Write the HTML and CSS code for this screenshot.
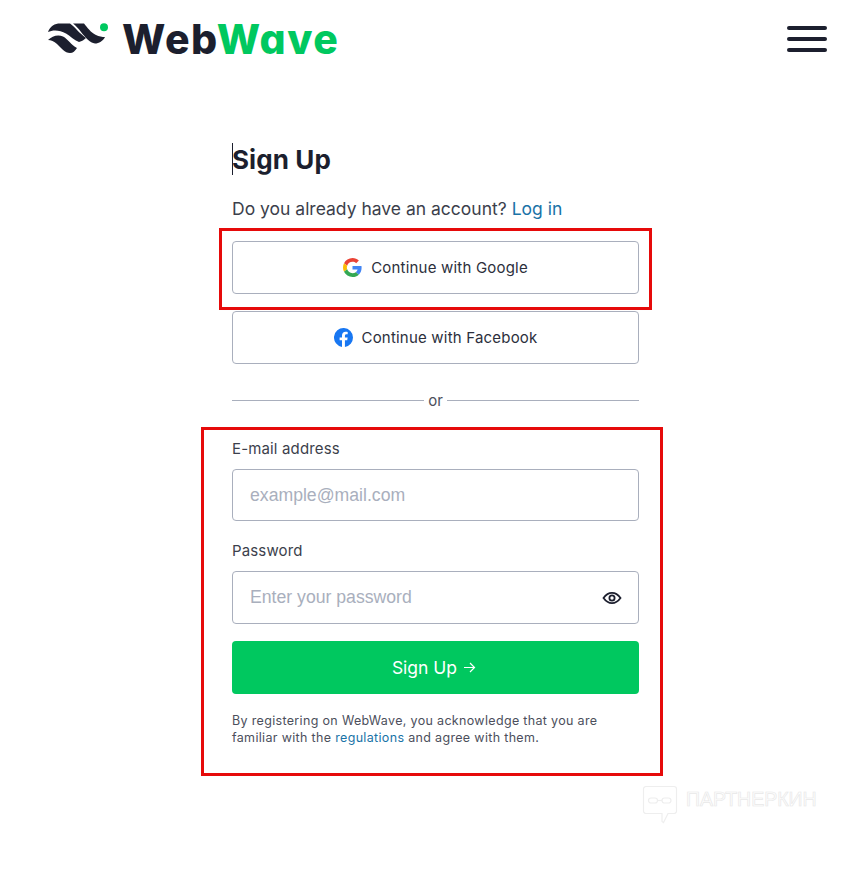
FILE: index.html
```html
<!DOCTYPE html>
<html lang="en">
<head>
  <meta charset="utf-8">
  <title>Sign Up - WebWave</title>
  <link rel="stylesheet" href="styles.css">
</head>
<body>

<div class="header">
  <a class="logo" href="#">
    <svg class="logo-mark" width="60" height="32" viewBox="0 0 60 32">
      <path fill="#1c1f2e" d="M0 9C2 3 7 .5 12 .5H22C27 4 31 10 38 15C36 17 34 18 31 19C26 17 22 13 18 10.500C12 7 5 6.500 0 9z"/>
      <path fill="#1c1f2e" d="M25 .5H36C39 4 43 10 48 12C51 13.500 54 14 57 14C55 18 51 20.500 47 20.500C42 20 37 14 33 9C30 5 28 3 25 .5z"/>
      <path fill="#1c1f2e" d="M0 17C4 13 10 11 15 13.500C20 16 23 22 29 25C27 28 25 30 22 30C17 30 13 25 9 21C6 18.500 3 17 0 17z"/>
      <circle fill="#00c85f" cx="56" cy="4.300" r="4"/>
    </svg>
    <span class="logo-text">Web<span class="logo-green">Wave</span></span>
  </a>
  <a class="burger" href="#"><span></span><span></span><span></span></a>
</div>

<div class="form-box">
  <h1><span class="caret"></span>Sign Up</h1>
  <p class="login-line">Do you already have an account? <a href="#">Log in</a></p>

  <a class="btn-social btn-google" href="#">
    <svg width="19" height="19" viewBox="0 0 48 48">
      <path fill="#ea4335" d="M24 9.500c3.500 0 6.700 1.200 9.200 3.600l6.900-6.900C35.900 2.400 30.500 0 24 0 14.600 0 6.500 5.400 2.600 13.200l8 6.200C12.400 13.700 17.700 9.500 24 9.500z"/>
      <path fill="#4285f4" d="M47 24.500c0-1.600-.1-3.100-.4-4.500H24v9h12.900c-.6 3-2.200 5.500-4.700 7.200l7.700 6c4.500-4.200 7.100-10.300 7.100-17.700z"/>
      <path fill="#fbbc05" d="M10.500 28.600c-.5-1.400-.8-3-.8-4.600s.3-3.200.8-4.600l-8-6.200C.9 16.500 0 20.100 0 24s.9 7.500 2.600 10.800l7.900-6.200z"/>
      <path fill="#34a853" d="M24 48c6.500 0 11.900-2.100 15.900-5.800l-7.700-6c-2.200 1.400-4.900 2.300-8.200 2.300-6.300 0-11.600-4.200-13.500-9.900l-8 6.200C6.500 42.600 14.600 48 24 48z"/>
    </svg>
    Continue with Google
  </a>
  <a class="btn-social btn-fb" href="#">
    <svg width="19" height="19" viewBox="0 0 24 24">
      <path fill="#1877f2" d="M24 12a12 12 0 1 0-13.900 11.900v-8.400H7.100V12h3V9.400c0-3 1.800-4.700 4.500-4.700 1.300 0 2.700.2 2.700.2v3h-1.500c-1.500 0-2 .9-2 1.900V12h3.400l-.5 3.500h-2.900v8.400A12 12 0 0 0 24 12z"/>
    </svg>
    Continue with Facebook
  </a>

  <div class="divider"><span>or</span></div>

  <label class="field-label">E-mail address</label>
  <div class="field"><input type="text" placeholder="example@mail.com"></div>

  <label class="field-label label-pass">Password</label>
  <div class="field field-pass">
    <input type="text" placeholder="Enter your password">
    <svg class="eye" width="20" height="20" viewBox="0 0 20 20">
      <path fill="none" stroke="#1c1f2e" stroke-width="1.800" d="M1.500 10C4 6.500 6.800 4.900 10 4.900s6 1.600 8.500 5.100c-2.500 3.500-5.300 5.100-8.500 5.100S4 13.500 1.500 10z"/>
      <circle fill="none" stroke="#1c1f2e" stroke-width="1.800" cx="10" cy="10" r="2.600"/>
    </svg>
  </div>

  <a class="btn-submit" href="#">Sign Up
    <svg width="13" height="13" viewBox="0 0 13 13">
      <path fill="none" stroke="#fff" stroke-width="1.200" d="M1 6.500h10.500M7 2l4.500 4.500L7 11"/>
    </svg>
  </a>

  <p class="terms">By registering on WebWave, you acknowledge that you are familiar with the <a href="#">regulations</a> and agree with them.</p>
</div>

<div class="mark mark-google"></div>
<div class="mark mark-form"></div>

<div class="watermark">
  <svg width="36" height="40" viewBox="0 0 36 40">
    <path fill="none" stroke="#eeeeee" stroke-width="1.200" d="M4 1.500h28a2.500 2.500 0 0 1 2.500 2.500v22a2.500 2.500 0 0 1-2.500 2.500h-6l-4.500 9-1.500-1V28.500H4A2.500 2.500 0 0 1 1.500 26V4A2.500 2.500 0 0 1 4 1.500z"/>
    <rect fill="none" stroke="#eeeeee" stroke-width="1.200" x="6.500" y="13" width="9" height="5" rx="2.500"/>
    <rect fill="none" stroke="#eeeeee" stroke-width="1.200" x="20" y="13" width="9" height="5" rx="2.500"/>
    <path fill="none" stroke="#eeeeee" stroke-width="1.200" d="M15.500 15.500h4.500"/>
  </svg>
  <span>ПАРТНЕРКИН</span>
</div>

</body>
</html>
```

FILE: styles.css
```css
html, body {
  margin: 0;
  padding: 0;
  height: 874px;
  overflow: hidden;
}

body {
  position: relative;
  background: white;
  color: #1c1f2e;
  font-family: Inter, "Liberation Sans", sans-serif;
}

a { text-decoration: none; }

h1, p { margin: 0; }

.header {
  display: flex;
  justify-content: space-between;
  align-items: center;
  height: 77px;
  padding: 0 39px 0 48px;
}

.logo {
  display: flex;
  align-items: center;
  gap: 14px;
}

.logo-mark { display: block; }

.logo-text {
  font-size: 41px;
  font-weight: 800;
  font-feature-settings: "cv11";
  line-height: 40px;
  letter-spacing: 1.500px;
  color: #1c1f2e;
}

.logo-green { color: #00c85f; }

.burger {
  display: flex;
  flex-direction: column;
  gap: 7px;
  width: 40px;
}

.burger span {
  height: 4px;
  border-radius: 2px;
  background: #1c1f2e;
}

.form-box {
  width: 407px;
  margin-left: 232px;
  padding: 66px 0 0 0;
}

h1 {
  position: relative;
  font-size: 26px;
  font-weight: 700;
  line-height: 34px;
  letter-spacing: 0.1px;
}

.caret {
  position: absolute;
  left: 0;
  top: 0;
  width: 1px;
  height: 32px;
  background: #1c1f2e;
}

.login-line {
  margin-top: 20px;
  font-size: 17.500px;
  line-height: 24px;
  color: #3c3f4c;
}

.login-line a, .terms a { color: #1a73a7; }

.btn-social {
  display: flex;
  justify-content: center;
  align-items: center;
  gap: 9px;
  box-sizing: border-box;
  height: 53px;
  margin-top: 20px;
  border: 1px solid #a9afbd;
  border-radius: 4px;
  font-size: 15px;
  letter-spacing: 0.2px;
  color: #2c2f3c;
}

.btn-google { padding-bottom: 1px; }

.btn-fb { margin-top: 17px; }

.divider {
  display: flex;
  align-items: center;
  gap: 4px;
  height: 20px;
  margin-top: 26px;
  font-size: 15px;
  line-height: 20px;
  color: #4c4f5c;
}

.divider span { padding-top: 2px; }

.divider:before, .divider:after {
  content: "";
  flex: 1;
  height: 1px;
  background: #a9afbd;
}

.field-label {
  display: block;
  margin-top: 29px;
  font-size: 15px;
  line-height: 20px;
  letter-spacing: 0.15px;
  color: #3c3f4c;
}

.label-pass { margin-top: 20px; }

.field {
  position: relative;
  margin-top: 10px;
}

.field input {
  display: block;
  box-sizing: border-box;
  width: 100%;
  height: 52px;
  padding: 0 17px;
  border: 1px solid #a9afbd;
  border-radius: 4px;
  background: white;
  font-family: "Liberation Sans", Arial, sans-serif;
  font-size: 17.650px;
}

.field-pass input { height: 53px; }

.field input::placeholder { color: #a9afbd; opacity: 1; }

.eye {
  position: absolute;
  right: 17px;
  top: 17px;
}

.btn-submit {
  display: flex;
  justify-content: center;
  align-items: center;
  gap: 6px;
  box-sizing: border-box;
  height: 53px;
  margin-top: 17px;
  padding-right: 3px;
  border-radius: 4px;
  background: #00c85f;
  color: white;
  font-size: 17.500px;
}

.terms {
  margin-top: 18px;
  padding-right: 30px;
  font-size: 12.500px;
  line-height: 17px;
  letter-spacing: 0.33px;
  color: #4c4f5c;
}

/* red annotation frames drawn over the screenshot */
.mark {
  position: absolute;
  box-sizing: border-box;
  border: 3px solid #e60a0a;
}

.mark-google { left: 219px; top: 228px; width: 433px; height: 82px; }
.mark-form { left: 201px; top: 427px; width: 462px; height: 349px; }

.watermark {
  position: absolute;
  left: 642px;
  top: 785px;
  display: flex;
  gap: 8px;
}

.watermark span {
  margin-top: 3px;
  font-family: "Liberation Sans", Arial, sans-serif;
  font-size: 19.500px;
  line-height: 22px;
  color: white;
  -webkit-text-stroke: 0.7px #e8e8e8;
}
```
